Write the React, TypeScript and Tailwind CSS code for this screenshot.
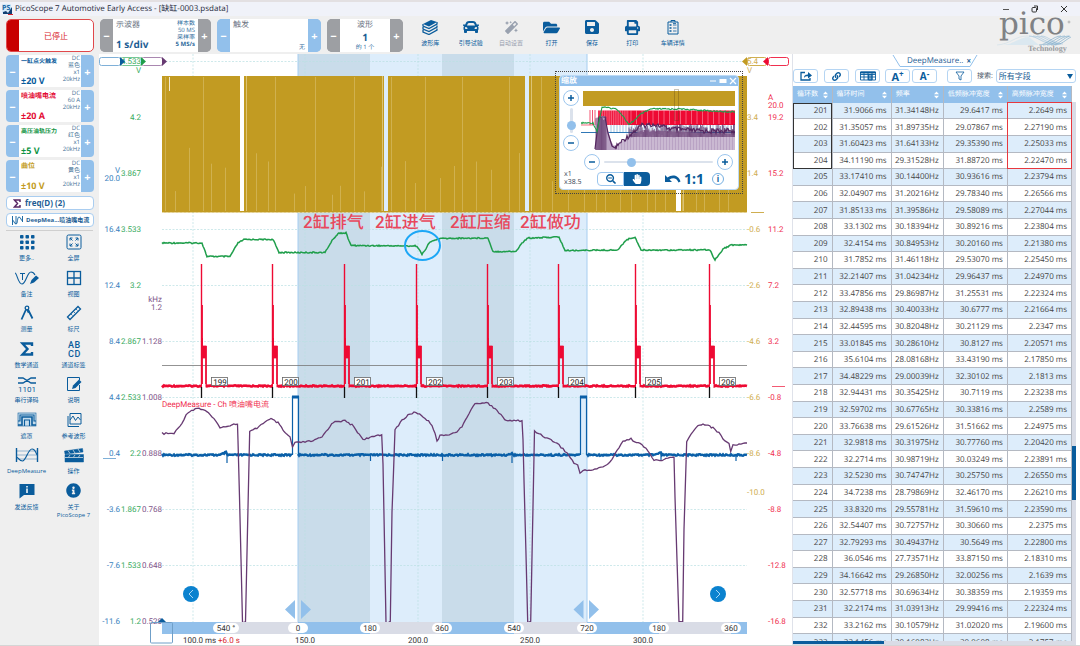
import React from "react";
import { FaCar, FaMagic, FaFolderOpen, FaSave, FaPrint, FaInfoCircle, FaSearchMinus, FaHandPaper, FaLink } from "react-icons/fa";

const CJK = "font-['Noto_Sans','Noto_Sans_CJK_SC',sans-serif]";

/* ---------- waveform data ---------- */

type Pt = [number, number];

const noise = (i: number) => {
  const v = Math.sin(i * 12.9898) * 43758.5453;
  return v - Math.floor(v) - 0.5;
};

function trace(points: Pt[], amp: number, step = 2): string {
  const out: string[] = [];
  let n = 0;
  for (let i = 0; i < points.length - 1; i++) {
    const [x0, y0] = points[i];
    const [x1, y1] = points[i + 1];
    const count = Math.max(1, Math.round(Math.abs(x1 - x0) / step));
    for (let k = 0; k < count; k++) {
      const t = k / count;
      out.push(`${(x0 + (x1 - x0) * t).toFixed(1)},${(y0 + (y1 - y0) * t + noise(n++) * amp).toFixed(1)}`);
    }
  }
  const last = points[points.length - 1];
  out.push(`${last[0]},${last[1]}`);
  return out.join(" ");
}

const GREEN: Pt[] = [
  [162, 243], [202, 243], [207, 256.5], [230, 256.5], [238, 243], [244, 239.5], [273, 239.5], [279, 252.5], [325, 252.5],
  [333, 239], [339, 233], [346, 233], [351, 245.5], [417, 246], [422, 254.5], [430, 242], [440, 238.5], [488, 238],
  [493, 251.5], [516, 251.5], [522, 243], [528, 238], [559, 237], [565, 250.5], [618, 250], [626, 240], [635, 237],
  [641, 250], [710, 250], [715, 260], [723, 249], [731, 245], [747, 245],
];

const PURPLE: Pt[] = [
  [162, 433.5], [174, 433.5], [180, 426], [188, 412], [197, 408], [205, 410], [212, 417], [220, 427], [227, 427], [232, 424],
  [237.5, 424], [238, 440], [239.5, 497], [242.5, 622], [245.5, 622], [247.5, 530], [249.7, 432], [257, 428], [263, 423],
  [271, 419], [278, 423], [285, 433], [290, 437], [292.5, 447], [295, 443], [313, 441], [322, 437], [330, 426], [335, 421],
  [345, 421], [352, 425], [363, 439], [370, 438], [378, 435], [381.7, 435], [383, 463], [386, 622], [390.3, 622], [392, 513],
  [395, 430], [402, 420], [410, 414], [416, 412], [425, 418], [432, 425], [435, 433], [437, 441], [440, 436], [455, 433],
  [462, 427], [467, 417], [473, 406], [477, 403], [488, 403], [497, 410], [503, 418], [508, 421], [522, 420.5], [523, 440],
  [524, 480], [527.7, 622], [530.7, 622], [534.5, 431], [545, 437], [557, 443], [567, 453], [574, 463], [577.7, 465],
  [580, 474], [583, 470], [593, 470], [605, 466], [612, 460], [617, 450], [623, 441], [631, 439], [642, 445], [650, 453],
  [654, 460.5], [662, 460.5], [668, 458], [674, 457], [675, 497], [679, 622], [682.7, 622], [684, 530], [686.7, 442],
  [693, 431], [698, 426], [703, 424], [708, 425], [713, 428], [719, 433], [725, 441], [729, 443], [730.7, 452], [733, 445],
  [747, 443],
];

const BLUE_DIPS: Pt[] = [[227, 463], [370.5, 461], [442.5, 461], [512, 463], [661, 461], [736, 461]];
const SPIKES = [201, 272, 344, 416, 487, 558, 635, 709];
const BANDS: [number, number, string][] = [
  [298, 72, "#c9dcea"], [370, 72, "#ddedfb"], [442, 72, "#c9dcea"], [514, 73, "#ddedfb"],
];
const STRIP: [number, number, string][] = [
  [162, 63, "#92c0eb"], [225, 73, "#d9dce6"], [298, 72, "#92c0eb"], [370, 72, "#d9dce6"], [442, 72, "#92c0eb"],
  [514, 73, "#d9dce6"], [587, 72, "#92c0eb"], [659, 72, "#d9dce6"], [731, 16, "#92c0eb"],
];
const ANGLES: [number, string][] = [
  [226, "540 °"], [298, "0"], [370, "180"], [442, "360"], [514, "540"], [587, "720"], [659, "180"], [731, "360"],
];
const YS = [61, 117, 173, 229, 285, 341, 397, 453, 509, 565, 621];
const GREEN_Y = ["4.533", "4.2", "3.867", "3.533", "3.2", "2.867", "2.533", "2.2", "1.867", "1.533", "1.2"];
const BLUE_Y = ["16.4", "12.4", "8.4", "4.4", "0.4", "-3.6", "-7.6", "-11.6"];
const PURPLE_Y = ["1.128", "1.008", "0.888", "0.768", "0.648", "0.528"];
const GOLD_Y = ["5.4", "3.4", "1.4", "-0.6", "-2.6", "-4.6", "-6.6", "-8.6"];
const RED_Y = ["19.2", "15.2", "11.2", "7.2", "3.2", "-0.8", "-4.8", "-8.8", "-12.8", "-16.8"];

const greenPath = trace(GREEN, 1.2, 1);
const purplePath = trace(PURPLE, 1.8, 2);
const redBase = trace([[162, 386], [747, 386]], 1.2, 1);
const blueA = trace([[162, 455], [220, 455], [226, 452.5], [227, 455], [292, 455]], 1.6, 1);
const blueB = trace([[298, 455], [508, 455], [512, 453], [513, 455], [580, 455]], 1.6, 1);
const blueC = trace([[587, 455], [654, 455], [661, 453], [662, 455], [747, 455]], 1.6, 1);

function ScopeChart() {
  return (
    <svg viewBox="99 54 693 591" className="block h-full w-full font-['Roboto','Noto_Sans_CJK_SC',sans-serif] text-[8px]" role="img" aria-label="Waveforms">
      {BANDS.map(([x, w, c]) => <rect key={x} x={x} y="54" width={w} height="568" fill={c} />)}
      <path d="M298 54V622M587 54V622" stroke="#a6cdf0" />
      <g stroke="#b9dfe2" strokeWidth="0.7" strokeDasharray="2 1.5">
        {YS.slice(0, 10).map((y) => <line key={y} x1="162" x2="747" y1={y + 0.5} y2={y + 0.5} />)}
        {[193, 305, 418, 530, 643].map((x) => <line key={x} x1={x} x2={x} y1="54" y2="622" />)}
      </g>

      <rect x="162" y="76" width="585" height="136.500" fill="#c29b22" />
      {Array.from({ length: 46 }, (_, i) => {
        const x = Math.round(164 + i * 12.6 + noise(i + 3) * 9);
        const full = i % 3 === 0;
        return <line key={i} x1={x + 0.5} x2={x + 0.5} y1={full ? 77 : 170 + noise(i) * 50} y2="211" stroke="#efdfae" strokeWidth="0.6" opacity="0.55" />;
      })}
      <path d="M169.500 77V91" stroke="#f4ead0" />
      <path d="M162 212.500H747" stroke="#ecdca8" strokeDasharray="2 2" strokeWidth="0.7" />
      <rect x="240" y="76" width="4" height="135" fill="#fff" />
      <rect x="384" y="76" width="4" height="135" fill="#ddedfb" />
      <rect x="525" y="76" width="4" height="135" fill="#ddedfb" />
      <rect x="676" y="76" width="5" height="135" fill="#fff" />
      <path d="M246.500 76V211M382.500 76V211M531.500 76V211M683.500 76V211" stroke="#efdfae" strokeWidth="0.6" />

      <polyline points={greenPath} fill="none" stroke="#1f9e4b" strokeWidth="1.5" />
      <path d="M162 365.500H747" stroke="#777" strokeWidth="0.8" />
      <polyline points={redBase} fill="none" stroke="#ee0a33" strokeWidth="2.6" />
      {SPIKES.map((x, i) => (
        <g key={x}>
          <path d={`M${x + 0.5} 386V264`} stroke="#ee0a33" strokeWidth="1.4" />
          <path d={`M${x + 1} 305V386`} stroke="#ee0a33" strokeWidth="1.8" />
          <path d={`M${x + 1} 346H${x + 5.500}V386H${x + 4.500}V358H${x + 1.500}Z`} fill="#ee0a33" stroke="#ee0a33" strokeWidth="0.8" />
          <path d={`M${x + 1.500} 358V338`} stroke="#ee0a33" />
          <rect x={x + 1} y="384" width="3.500" height="4" fill={x < 298 || x > 587 ? "#fff" : i % 2 === 0 ? "#cddfec" : "#ddedfb"} />
          <path d={`M${x + 0.5} 387V398`} stroke="#111" strokeWidth="1.3" />
          <rect x={x + 10.500} y="377.500" width="16" height="8" fill="#fff" stroke="#666" strokeWidth="0.8" />
          <text x={x + 19} y="384.500" textAnchor="middle" fill="#222">{199 + i}</text>
        </g>
      ))}

      <g fill="none" stroke="#0a5fa8">
        <g strokeWidth="2.400">
          <polyline points={blueA} />
          <polyline points={blueB} />
          <polyline points={blueC} />
          <path d="M292 397H299M580 397H587" strokeWidth="3" />
        </g>
        <path d="M292.500 455V396M298.500 396V455M580.500 455V396M586.500 396V455" strokeWidth="1.200" />
        {BLUE_DIPS.map(([x, y]) => <path key={x} d={`M${x} 454V${y}`} strokeWidth="1.200" />)}
      </g>
      <polyline points={purplePath} fill="none" stroke="#673a72" strokeWidth="1.300" />
      <text x="162" y="407" fill="#f0304f">DeepMeasure - Ch 喷油嘴电流</text>

      <g fill="#e8485c" className="text-[17px] font-medium">
        <text x="303" y="228">2缸排气</text>
        <text x="375" y="228">2缸进气</text>
        <text x="450" y="228">2缸压缩</text>
        <text x="520" y="228">2缸做功</text>
      </g>
      <ellipse cx="422.500" cy="245.500" rx="17.500" ry="14.500" fill="none" stroke="#1da7f6" strokeWidth="2" />

      {/* axis captions */}
      <g textAnchor="end">
        <g fill="#3a82be">
          <text x="120" y="173">V</text>
          <text x="120" y="181">20.0</text>
          {BLUE_Y.map((t, i) => <text key={t} x="120" y={YS[i + 3] + 3}>{t}</text>)}
        </g>
        <g fill="#38ab60">
          {GREEN_Y.map((t, i) => <text key={t} x="141" y={YS[i] + 3}>{t}</text>)}
          <text x="141" y="73">V</text>
        </g>
        <g fill="#805589">
          <text x="162" y="302">kHz</text>
          <text x="162" y="310">1.2</text>
          {PURPLE_Y.map((t, i) => <text key={t} x="162" y={YS[i + 5] + 3}>{t}</text>)}
        </g>
      </g>
      <g fill="#cfae50">
        {GOLD_Y.map((t, i) => <text key={t} x="747" y={YS[i] + 3}>{t}</text>)}
        <text x="747" y="73">V</text>
        <text x="747" y="495">-10.0</text>
      </g>
      <g fill="#f0304f">
        <text x="768" y="100">A</text>
        <text x="768" y="108">20.0</text>
        {RED_Y.map((t, i) => <text key={t} x="768" y={YS[i + 1] + 3}>{t}</text>)}
      </g>
      <path d="M103 458.500H116" stroke="#7fb0d8" />
      <path d="M751 212.500H764" stroke="#cfae50" />
      <path d="M772 386.500H785" stroke="#f0304f" strokeWidth="0.8" />

      {/* channel ruler handles */}
      <g fill="none">
        <rect x="99.500" y="57.500" width="21" height="8" rx="2" stroke="#7fb0d8" />
        <rect x="120.500" y="57.500" width="21" height="8" rx="2" stroke="#77c795" />
        <rect x="141.500" y="57.500" width="21" height="8" rx="2" stroke="#a987b0" />
        <rect x="747.500" y="57.500" width="19" height="8" rx="2" stroke="#cfae50" />
        <rect x="768.500" y="57.500" width="20" height="8" rx="2" stroke="#f0304f" />
      </g>
      <path d="M120 57L125 61.500L120 66Z" fill="#0a5c9c" />
      <path d="M141 57L146 61.500L141 66Z" fill="#1f9e4b" />
      <path d="M162 57L167 61.500L162 66Z" fill="#673a72" />
      <path d="M747 57L742 61.500L747 66Z" fill="#c29b22" />
      <path d="M768 57L763 61.500L768 66Z" fill="#ee0a33" />

      {/* time and phase axis */}
      {STRIP.map(([x, w, c]) => <rect key={x} x={x} y="622" width={w} height="12" fill={c} />)}
      {ANGLES.map(([x, t]) => {
        const w = t.length > 3 ? 26 : 20;
        return (
          <g key={x}>
            <rect x={x - w / 2} y="623" width={w} height="10" rx="5" fill="#fff" />
            <text x={x} y="631" textAnchor="middle" fill="#333">{t}</text>
          </g>
        );
      })}
      <rect x="150.500" y="622.500" width="22" height="20.500" rx="1" fill="none" stroke="#6f9fc8" />
      <path d="M158 622L162 618L166 622Z" fill="#0a5c9c" />
      <g fill="#333">
        <text x="183" y="643">100.0 ms</text>
        <text x="218" y="643" fill="#d8262c">+6.0 s</text>
        <g textAnchor="middle">
          <text x="305" y="643">150.0</text>
          <text x="418" y="643">200.0</text>
          <text x="530" y="643">250.0</text>
          <text x="643" y="643">300.0</text>
        </g>
      </g>
      <path d="M295 600V619L285 609.500ZM301 600V619L311 609.500ZM583.500 600V619L573.500 609.500ZM589 600V619L599 609.500Z" fill="#92c0eb" />
    </svg>
  );
}

/* ---------- zoom overview ---------- */

const bars = (x0: number, x1: number, y0: number, y1: number, step: number, seed: number, vary: number) => {
  let d = "";
  for (let x = x0, i = 0; x < x1; x += step, i++) d += `M${x.toFixed(1)} ${(y0 + noise(i + seed) * vary).toFixed(1)}V${y1}`;
  return d;
};

const overviewPurple = trace([[34, 59], [40, 53], [50, 45], [60, 37], [72, 35], [90, 40], [120, 42], [154, 42]], 5, 1);
const overviewGreen = trace([[0, 34], [12, 34], [16, 42], [21, 18], [36, 20], [42, 27], [48, 36], [60, 25], [70, 20], [100, 20], [130, 22], [154, 23]], 1.5, 1);

function Overview() {
  return (
    <svg viewBox="0 0 154 61" className="h-[61px] w-full" role="img" aria-label="Overview">
      <rect x="2" y="2" width="152" height="15" fill="#c29b22" />
      <path d={bars(9, 16, 21, 36, 2.5, 2, 0)} stroke="#ee0a33" strokeWidth="0.7" />
      <rect x="17" y="21.500" width="137" height="14.500" fill="#ee0a33" />
      <path d={bars(18, 48, 21, 36, 1.8, 9, 0)} stroke="#ffb3c0" strokeWidth="0.5" />
      <path d={bars(50, 154, 21, 35, 5.500, 5, 0)} stroke="#ffb3c0" strokeWidth="0.5" />
      <path d="M0 43.500H154" stroke="#2f77b6" strokeWidth="1.200" />
      <path d={bars(30, 154, 36, 43, 3, 5, 0)} stroke="#6aa2d2" strokeWidth="0.6" />
      <path d="M0 36H12" stroke="#ee0a33" strokeWidth="0.6" />
      <path d="M14 61L17 34L19 27H24L26 38L30 52L34 59L40 53L50 46L62 41L80 42L154 45V61Z" fill="#b9a3c4" />
      <path d={bars(15, 26, 29, 61, 1.100, 3, 4)} stroke="#54265f" strokeWidth="0.7" />
      <path d={bars(36, 154, 46, 61, 3, 11, 6)} stroke="#fff" strokeWidth="0.5" />
      <path d={bars(48, 154, 39, 48, 1.100, 17, 8)} stroke="#54265f" strokeWidth="0.7" />
      <path d="M14 60L18 28H24L27 44L31 57L34 59" fill="none" stroke="#54265f" strokeWidth="1.200" />
      <polyline points={overviewPurple} fill="none" stroke="#54265f" strokeWidth="1.200" />
      <polyline points={overviewGreen} fill="none" stroke="#1f9e4b" strokeWidth="1.100" />
      <rect x="93.500" y="0.500" width="4" height="31" fill="none" stroke="#55421a" strokeWidth="0.6" strokeDasharray="1 1" />
    </svg>
  );
}

function RoundButton({ sign, label }: { sign: "+" | "-"; label: string }) {
  return (
    <button aria-label={label} className="flex size-4 shrink-0 items-center justify-center rounded-full border border-[#9cc6ee] bg-white">
      <svg viewBox="0 0 8 8" className="size-2" stroke="#0a5c9c" strokeWidth="1.500">
        <path d={sign === "+" ? "M1 4H7M4 1V7" : "M1 4H7"} />
      </svg>
    </button>
  );
}

const THUMB = "[&::-webkit-slider-thumb]:appearance-none [&::-webkit-slider-thumb]:size-[9px] [&::-webkit-slider-thumb]:rounded-full [&::-webkit-slider-thumb]:bg-[#92c0eb]";

function ZoomWindow() {
  return (
    <section className="absolute top-[17px] right-[49px] w-[188px] border border-dotted border-[#444] p-[3px]">
      <div className={`overflow-hidden rounded-sm border border-[#bcd9f4] bg-white pb-[2px] ${CJK}`}>
        <header className="flex h-[10px] items-center bg-[#92c0eb] px-px text-[8px] leading-[10px] font-bold text-white">
          <h2 className="grow">缩放</h2>
          <svg viewBox="0 0 28 8" className="h-2 w-7" stroke="#fff" fill="none">
            <path d="M1 4H7M21 1L27 7M27 1L21 7" strokeWidth="1.200" />
            <rect x="11" y="2.500" width="6" height="3" fill="#fff" />
          </svg>
        </header>
        <div className="flex gap-[2px] px-[3px] pt-[3px]">
          <div className="flex w-4 flex-col items-center gap-[2px] pt-px">
            <RoundButton sign="+" label="垂直放大" />
            <input type="range" aria-label="垂直缩放" defaultValue={18} className={`h-[25px] w-[3px] appearance-none rounded bg-[#dbe2ec] [direction:rtl] [writing-mode:vertical-lr] ${THUMB}`} />
            <RoundButton sign="-" label="垂直缩小" />
          </div>
          <div className="min-w-0 grow"><Overview /></div>
        </div>
        <div className="mt-[3px] flex items-center gap-1 pr-[5px] pl-6">
          <RoundButton sign="-" label="水平缩小" />
          <input type="range" aria-label="水平缩放" defaultValue={23} className={`h-[2px] min-w-0 grow appearance-none rounded bg-[#dbe2ec] ${THUMB}`} />
          <RoundButton sign="+" label="水平放大" />
        </div>
        <div className="flex h-[17px] items-center pl-1">
          <p className="w-[33px] text-[7px] leading-[8px] text-gray-600">x1<br />x38.5</p>
          <button aria-label="缩放工具" className="flex h-[14px] w-[27px] items-center justify-center rounded-l-sm border border-[#9cc6ee] text-[#0a5c9c]"><FaSearchMinus size={10} /></button>
          <button aria-label="平移工具" className="flex h-[14px] w-[26px] items-center justify-center rounded-r-sm bg-[#0a5c9c] text-white"><FaHandPaper size={10} /></button>
          <button aria-label="撤消" className="ml-[14px]">
            <svg viewBox="0 0 17 12" className="h-3 w-[17px]"><path d="M1 2V9H8L5.500 6.500C9 4 13 5 14.500 9.500L16.500 8.500C14.500 2 8 1 3.500 4.500Z" fill="#0a5c9c" /></svg>
          </button>
          <button className="ml-[3px] text-[14px] leading-none font-bold text-[#0a5c9c]">1:1</button>
          <button aria-label="信息" className="ml-2 flex size-3 items-center justify-center rounded-full border border-[#74aee0] text-[8px] leading-none font-bold text-[#0a5c9c]">i</button>
        </div>
      </div>
    </section>
  );
}

function NavButton({ side }: { side: "left" | "right" }) {
  return (
    <button
      aria-label={side === "left" ? "上一个" : "下一个"}
      className={`absolute bottom-[43px] flex size-4 items-center justify-center rounded-full bg-[#0b82cf] ${side === "left" ? "left-[84px]" : "right-[66px]"}`}
    >
      <svg viewBox="0 0 8 10" className="h-[10px] w-2" fill="none" stroke="#b8e0fa" strokeWidth="0.9">
        <path d={side === "left" ? "M6 1L2 5L6 9" : "M2 1L6 5L2 9"} />
      </svg>
    </button>
  );
}

/* ---------- top bar ---------- */

function Stepper({ tone, width, children, label }: { tone: "gray" | "blue"; width: string; children: React.ReactNode; label: string }) {
  const side = tone === "gray" ? "bg-[#9d9fa3]" : "bg-[#92c0eb]";
  return (
    <div className={`flex h-[33px] overflow-hidden rounded-[5px] ${width} ${side}`}>
      <button aria-label={`${label} -`} className={`w-[13px] shrink-0 text-[11px] leading-none font-bold text-white ${side}`}>−</button>
      <div className="relative min-w-0 grow bg-white">{children}</div>
      <button aria-label={`${label} +`} className={`w-[13px] shrink-0 text-[11px] leading-none font-bold text-white ${side}`}>+</button>
    </div>
  );
}

const Books = () => (
  <svg viewBox="0 0 16 16" className="size-4">
    <path d="M1 5L9 1L15 3L7 7.500Z" fill="#0a5c9c" />
    <path d="M1 5V7L7 9.500L15 5V3M1 8V10L7 12.500L15 8V6.500M1 11V13L7 15.500L15 11V9.500" fill="none" stroke="#0a5c9c" strokeWidth="1.300" />
  </svg>
);
const Checklist = () => (
  <svg viewBox="0 0 12 16" className="h-4 w-3" fill="none" stroke="#0a5c9c">
    <path d="M1 3H11V15H1ZM4 3V1.500H8V3" />
    <path d="M2.500 6H4.500M2.500 9H4.500M2.500 12H4.500" strokeWidth="1.500" />
    <path d="M6 6H9.500M6 9H9.500M6 12H9.500M6 4.500H9" strokeWidth="0.8" />
  </svg>
);

const TOOLS: { label: string; icon: React.ReactNode; off?: boolean }[] = [
  { label: "波形库", icon: <Books /> },
  { label: "引导试验", icon: <FaCar size={16} /> },
  { label: "自动设置", icon: <FaMagic size={13} />, off: true },
  { label: "打开", icon: <FaFolderOpen size={17} /> },
  { label: "保存", icon: <FaSave size={16} /> },
  { label: "打印", icon: <FaPrint size={15} /> },
  { label: "车辆详情", icon: <Checklist /> },
];

function Logo() {
  return (
    <svg viewBox="0 0 84 38" className="h-[38px] w-[84px] overflow-visible" role="img" aria-label="pico Technology">
      <g fill="none" strokeWidth="0.6">
        <path d="M4 29C18 28 22 20 34 20S52 28 62 28" stroke="#cddfea" />
        <path d="M8 29C20 29 26 21 36 21L46 29Z" fill="#dbe8f0" stroke="none" />
        <g stroke="#9cc0d8">
          <path d="M36 20C44 20 50 28 60 28M40 20C48 20 54 28 64 28M44 20C52 20 58 28 68 28M48 20C56 20 60 28 70 28" />
          <path d="M46 29C54 29 60 20 68 20M50 29C58 29 64 20 72 20M54 29C62 29 68 20 76 20M58 29C66 29 70 22 77 20M62 29C70 28 72 24 78 21" stroke="#6ea3c6" />
        </g>
      </g>
      <text x="6" y="18" fontSize="31" fill="#808285" fontFamily="DejaVu Serif, serif">pico</text>
      <circle cx="76" cy="6" r="1" fill="none" stroke="#808285" strokeWidth="0.5" />
      <text x="35" y="35" fontSize="8" fontWeight="bold" fill="#9a9c9f" fontFamily="Liberation Serif, serif">Technology</text>
    </svg>
  );
}

function TopBar() {
  return (
    <div className="flex h-[38px] shrink-0 items-start bg-[#efefef] pt-[3px] pl-[6px]">
      <button className="flex h-[33px] w-[88px] items-center overflow-hidden rounded-[5px] border border-[#e0484b] bg-white text-[8px] text-[#d8262c]">
        <span className="h-full w-3 bg-[#c80000]" />
        <span className="grow">已停止</span>
      </button>
      <div className="ml-[6px] flex gap-[6px]">
        <Stepper tone="gray" width="w-[111px]" label="时基">
          <div className="flex h-full justify-between px-[3px] leading-none">
            <div className="flex flex-col justify-between py-[2px]">
              <span className="text-[8px] text-gray-500">示波器</span>
              <span className="text-[10px] leading-[12px] font-bold text-[#1d5d94]">1 s/div</span>
            </div>
            <div className="pt-px text-right text-[6px] leading-[7px] text-[#2f6c9d]">
              样本数<br />50 MS<br />采样率<br /><b>5 MS/s</b>
            </div>
          </div>
        </Stepper>
        <Stepper tone="blue" width="w-[104px]" label="触发">
          <div className="flex h-full justify-between px-[3px] py-[2px] leading-none">
            <span className="text-[8px] text-gray-500">触发</span>
            <span className="self-end text-[6px] text-[#2f6c9d]">无</span>
          </div>
        </Stepper>
        <Stepper tone="gray" width="w-[76px]" label="波形">
          <div className="flex h-full flex-col items-center justify-between py-[2px] leading-none">
            <span className="text-[8px] text-gray-500">波形</span>
            <b className="text-[10px] text-[#1d5d94]">1</b>
            <span className="text-[6px] text-[#2f6c9d]">的 1 个</span>
          </div>
        </Stepper>
      </div>
      <nav className="ml-[7px] grid w-[283px] grid-cols-7">
        {TOOLS.map((t) => (
          <button key={t.label} disabled={t.off} className={`flex flex-col items-center ${t.off ? "text-gray-400" : "text-[#0a5c9c]"}`}>
            <span className="flex h-4 items-center">{t.icon}</span>
            <span className="mt-1 text-[6px] leading-[8px] whitespace-nowrap">{t.label}</span>
          </button>
        ))}
      </nav>
      <div className="-mt-[3px] mr-[3px] ml-auto"><Logo /></div>
    </div>
  );
}

function TitleBar() {
  return (
    <header className="flex h-4 shrink-0 items-center border-t-2 border-[#e3e0e2] bg-[#f0f2f9] pr-[3px] pl-[2px] text-[8px] leading-none text-gray-800">
      <svg viewBox="0 0 11 11" className="size-[11px] overflow-visible">
        <rect width="9" height="9" fill="#d5e8f7" />
        <text x="0" y="6" fontSize="7" fontWeight="bold" fill="#1a66a5">PS</text>
        <path d="M1 8L4 7L6 9L10 3V10H1Z" fill="#123f73" />
        <path d="M6 10H11V11H6Z" fill="#d8262c" />
      </svg>
      <h1 className="ml-[2px]">PicoScope 7 Automotive Early Access - [缺缸-0003.psdata]</h1>
      <div className="ml-auto flex items-center gap-[21px] pr-[9px]">
        <button aria-label="最小化"><svg viewBox="0 0 8 8" className="size-2" stroke="#555"><path d="M1 4.500H7" /></svg></button>
        <button aria-label="还原"><svg viewBox="0 0 8 8" className="size-2" fill="none" stroke="#333"><rect x="1" y="2.500" width="4.500" height="4.500" rx="1" /><path d="M3 1H6.500V5" /></svg></button>
        <button aria-label="关闭"><svg viewBox="0 0 8 8" className="size-2" stroke="#333"><path d="M1 1L7 7M7 1L1 7" /></svg></button>
      </div>
    </header>
  );
}

/* ---------- side bar ---------- */

const CHANNELS = [
  { name: "一缸点火触发", range: "±20 V", info: ["DC", "蓝色", "x1", "20kHz"], color: "text-[#0a5c9c]" },
  { name: "喷油嘴电流", range: "±20 A", info: ["DC", "60 A", "20kHz"], color: "text-[#e30b34]" },
  { name: "高压油轨压力", range: "±5 V", info: ["DC", "红色", "x1", "20kHz"], color: "text-[#0f9444]" },
  { name: "曲位", range: "±10 V", info: ["DC", "黄色", "x1", "20kHz"], color: "text-[#c29b22]" },
];

function ChannelCard({ c }: { c: (typeof CHANNELS)[number] }) {
  return (
    <div className="flex h-8 overflow-hidden rounded-[4px] bg-[#92c0eb]">
      <button aria-label={`${c.name} -`} className="w-[13px] shrink-0 text-[11px] leading-none font-bold text-white">−</button>
      <div className="flex min-w-0 grow justify-between bg-white pr-px pl-[2px]">
        <div className={`flex flex-col justify-between pt-[2px] pb-px font-bold whitespace-nowrap ${c.color}`}>
          <span className={`leading-[9px] ${c.name.length > 5 ? "text-[6px]" : "text-[7px]"}`}>{c.name}</span>
          <span className="text-[9px] leading-[10px]">{c.range}</span>
        </div>
        <div className="text-right text-[6px] leading-[7px] whitespace-nowrap text-[#3f6f96]">
          {c.info.map((t) => <div key={t}>{t}</div>)}
        </div>
      </div>
      <button aria-label={`${c.name} +`} className="w-[13px] shrink-0 text-[11px] leading-none font-bold text-white">+</button>
    </div>
  );
}

const B = "#0a5c9c";
const Ico = ({ w = 16, children }: { w?: 16 | 24; children: React.ReactNode }) => (
  <svg viewBox={`0 0 ${w} 16`} className={`overflow-visible ${w === 24 ? "h-4 w-6" : "size-4"}`} fill="none" stroke={B} strokeWidth="1.300">{children}</svg>
);

const SIDE: { label: string; icon: React.ReactNode }[] = [
  { label: "更多..", icon: <Ico><g fill={B} stroke="none">{[1, 6.500, 12].map((y) => [1, 6.500, 12].map((x) => <rect key={`${x}-${y}`} x={x} y={y} width="3.500" height="3.500" rx="0.8" />))}</g></Ico> },
  { label: "全屏", icon: <Ico><rect x="1" y="1" width="14" height="14" rx="1.500" strokeWidth="1" /><path d="M4 6.500V4H6.500M9.500 4H12V6.500M12 9.500V12H9.500M6.500 12H4V9.500M4 4L6.500 6.500M12 4L9.500 6.500M4 12L6.500 9.500M12 12L9.500 9.500" strokeWidth="1" /></Ico> },
  { label: "备注", icon: <Ico w={24}><path d="M0 3C2 3 3 14 7 14S12 2 16 2C18 2 19 3 20 5" strokeWidth="1.100" /><path d="M5 3.500H10M7.500 3.500V10" strokeWidth="1" /><path d="M15 14L16.500 10L21 5.500L24 8L19 12.500Z" fill={B} stroke="none" /></Ico> },
  { label: "视图", icon: <Ico><rect x="1.500" y="1.500" width="13" height="13" /><path d="M8 1.500V14.500M1.500 8H14.500" /></Ico> },
  { label: "测量", icon: <Ico><circle cx="8" cy="3" r="1.800" /><path d="M7 4.500L2.500 14.500M9 4.500L13.500 13.500" strokeWidth="1.800" /><path d="M8 5L9.500 8" /></Ico> },
  { label: "标尺", icon: <Ico><path d="M1.500 12L12 1.500L14.500 4L4 14.500Z" /><path d="M5 9L6.500 10.500M7.500 6.500L9 8M10 4L11.500 5.500" strokeWidth="0.8" /></Ico> },
  { label: "数学通道", icon: <Ico><path d="M13 5V2.500H3.500L8.500 8L3.500 13.500H13V11" strokeWidth="2.400" /></Ico> },
  { label: "通道标签", icon: <Ico><g fill={B} stroke="none" fontSize="9" fontWeight="500" className="font-['Roboto']"><text x="2" y="7">A</text><text x="8.500" y="7">B</text><text x="2" y="15.500">C</text><text x="8.500" y="15.500">D</text></g></Ico> },
  { label: "串行译码", icon: <Ico w={24}><path d="M3 2H8L16 7H21M3 7H8L16 2H21" strokeWidth="1.400" /><text x="12" y="15.500" textAnchor="middle" fontSize="8" fill={B} stroke="none" className="font-['Roboto']">1101</text></Ico> },
  { label: "说明", icon: <Ico><path d="M13.500 9V14.500H1.500V1.500H13.500V4" strokeWidth="1" /><path d="M3 2V1M5 2V1M7 2V1M9 2V1M11 2V1" strokeWidth="0.8" /><path d="M6 13L7 9.500L13 3.500L15.500 6L9.500 12Z" fill={B} stroke="none" /></Ico> },
  { label: "遮罩", icon: <Ico w={24}><rect x="3" y="1" width="18" height="13" fill="#c5dcec" strokeWidth="0.6" /><path d="M3 13H7V5H17V13H21" strokeWidth="1.600" /><path d="M9.500 14V8H14.500V14M3 9H5V3H19V9H21" strokeWidth="1.100" /></Ico> },
  { label: "参考波形", icon: <Ico><path d="M4 1.500H15V12H4Z" strokeWidth="1" /><path d="M2 4V14.500H13" strokeWidth="1" /><path d="M4 8L7 4L9.500 8.500L12 5L14.500 8" strokeWidth="1" /></Ico> },
  { label: "DeepMeasure", icon: <Ico w={24}><path d="M1.500 1V15M22.500 1V15" strokeWidth="1.400" /><path d="M2 8H22M2 4H22M2 12H22" strokeWidth="0.4" /><path d="M1.500 10C3 10 4 14 7.500 14S13 2 17 2S21 8 22.500 8" strokeWidth="1.200" /></Ico> },
  { label: "操作", icon: <Ico w={24}><path d="M3 7.500H21.500V15H3Z" fill={B} strokeWidth="0.5" /><path d="M2.500 4L20.500 1.500L21 5L3 7Z" fill={B} strokeWidth="0.5" /><path d="M6 3.500L8 6.500M11 3L13 6M16 2L18 5M8 8L6.500 10M13 8L11.500 10M18 8L16.500 10M3 10.500H21" stroke="#efefef" strokeWidth="0.7" /></Ico> },
  { label: "发送反馈", icon: <Ico><path d="M0.500 1H15.500V12H5L0.500 15.500Z" fill={B} stroke="none" /><path d="M8 5.500V10M8 3V4.500" stroke="#fff" strokeWidth="1.500" /></Ico> },
  { label: "关于 PicoScope 7", icon: <FaInfoCircle size={15} /> },
];

function SideBar() {
  return (
    <aside className="w-[99px] shrink-0 bg-[#efefef] px-[6px] pt-px">
      <div className="mr-[-1px] flex flex-col gap-[3px]">
        {CHANNELS.map((c) => <ChannelCard key={c.name} c={c} />)}
        <button className="mt-px flex h-[14px] items-center gap-1 rounded-[4px] border border-[#a9cdf0] bg-white px-[6px] text-[8px] leading-none font-bold text-[#1d5d94]">
          <svg viewBox="0 0 8 9" className="h-[9px] w-2" fill="none" stroke="#5a2a66" strokeWidth="1.500"><path d="M7 3V1H1.500L4.500 4.500L1.500 8H7V6" /></svg>
          freq(D) (2)
        </button>
        <button className="flex h-[14px] items-center gap-[3px] rounded-[4px] border border-[#a9cdf0] bg-white px-[5px] text-[6px] leading-none font-bold whitespace-nowrap text-[#1d5d94]">
          <svg viewBox="0 0 11 9" className="h-[9px] w-[11px] shrink-0" fill="none" stroke={B} strokeWidth="0.9"><path d="M0.500 0V9M10.500 0V6M0.500 4C2 4 2 8 4 8S5 1 7 1S9 5 10.500 5M4 0V8" /></svg>
          DeepMea...喷油嘴电流
        </button>
      </div>
      <hr className="mt-[3px] border-[#cfcfcf]" />
      <div className="mt-[3px] grid h-[284px] grid-cols-[41px_53px] auto-rows-fr">
        {SIDE.map((s) => (
          <button key={s.label} className="flex min-h-0 flex-col items-center text-[#0a5c9c]">
            <span className="flex h-4 shrink-0 items-center">{s.icon}</span>
            <span className={`mt-1 text-[6px] leading-[8px] ${s.label.startsWith("关于") ? "w-9" : "whitespace-nowrap"}`}>{s.label}</span>
          </button>
        ))}
      </div>
    </aside>
  );
}

/* ---------- measurement table ---------- */

const ROWS: string[][] = `201 31.9066 31.34148 29.6417 2.2649
202 31.35057 31.89735 29.07867 2.27190
203 31.60423 31.64133 29.35390 2.25033
204 34.11190 29.31528 31.88720 2.22470
205 33.17410 30.14400 30.93616 2.23794
206 32.04907 31.20216 29.78340 2.26566
207 31.85133 31.39586 29.58089 2.27044
208 33.1302 30.18394 30.89216 2.23804
209 32.4154 30.84953 30.20160 2.21380
210 31.7852 31.46118 29.53070 2.25450
211 32.21407 31.04234 29.96437 2.24970
212 33.47856 29.86987 31.25531 2.22324
213 32.89438 30.40033 30.6777 2.21664
214 32.44595 30.82048 30.21129 2.2347
215 33.01845 30.28610 30.8127 2.20571
216 35.6104 28.08168 33.43190 2.17850
217 34.48229 29.00039 32.30102 2.1813
218 32.94431 30.35425 30.7119 2.23238
219 32.59702 30.67765 30.33816 2.2589
220 33.76638 29.61526 31.51662 2.24975
221 32.9818 30.31975 30.77760 2.20420
222 32.2714 30.98719 30.03249 2.23891
223 32.5230 30.74747 30.25750 2.26550
224 34.7238 28.79869 32.46170 2.26210
225 33.8320 29.55781 31.59610 2.23590
226 32.54407 30.72757 30.30660 2.2375
227 32.79293 30.49437 30.5649 2.22800
228 36.0546 27.73571 33.87150 2.18310
229 34.16642 29.26850 32.00256 2.1639
230 32.57718 30.69634 30.38359 2.19359
231 32.2174 31.03913 29.99416 2.22324
232 33.2162 30.10579 31.02020 2.19600
233 33.1456 30.16983 30.9608 2.1757`.split("\n").map((r) => r.split(" "));

const HEADERS = ["循环数", "循环时间", "频率", "低频脉冲宽度", "高频脉冲宽度"];
const UNITS = ["", " ms", "Hz", " ms", " ms"];

const TOOL_BTN = "flex h-[14px] w-[25px] items-center justify-center rounded-[3px] border border-[#b5d5f3] bg-white text-[#0a5c9c]";

function MeasurePanel() {
  return (
    <section className="flex w-[287px] shrink-0 flex-col bg-white pr-1">
      <div className="relative ml-[99px] flex h-[14px] w-[86px] shrink-0 items-center justify-center pl-2 text-[8px] leading-none text-[#1d5d94]">
        <svg viewBox="0 0 86 14" className="absolute inset-0" fill="none" stroke="#92c0eb"><path d="M1 1L8 12.500H78L85 1" /></svg>
        <span>DeepMeasure..</span>
        <button aria-label="关闭标签" className="ml-[3px] font-bold">×</button>
      </div>
      <div className="mt-px flex h-[14px] shrink-0 items-center">
        <div className="flex gap-[6px]">
          <button aria-label="导出" className={TOOL_BTN}>
            <svg viewBox="0 0 12 10" className="h-[10px] w-3" fill="none" stroke={B} strokeWidth="1.300"><path d="M5 1.500H1V9H10V7" /><path d="M4 7C4 4 6 3.500 8 3.500V1L12 4.500L8 7.500V5.300C6 5.300 5 5.500 4 7Z" fill={B} stroke="none" /></svg>
          </button>
          <button aria-label="链接" className={TOOL_BTN}><FaLink size={9} /></button>
          <button aria-label="列" className={TOOL_BTN}>
            <svg viewBox="0 0 16 10" className="h-[10px] w-4" fill="none" stroke={B} strokeWidth="0.9"><path d="M0.500 1H15.500V9H0.500ZM4 1V9M8 1V9M12 1V9M0.500 3.500H15.500M0.500 6H15.500" /><path d="M0.500 1H15.500V2H0.500Z" fill={B} /><path d="M8.500 3.500H12V9H8.500Z" fill={B} fillOpacity="0.500" /></svg>
          </button>
        </div>
        <button className={`ml-[5px] ${TOOL_BTN} text-[11px] leading-none font-bold`}>A<span className="self-start text-[8px]">+</span></button>
        <button className={`ml-[2px] ${TOOL_BTN} text-[10px] leading-none font-bold`}>A<span className="self-start text-[8px]">-</span></button>
        <button aria-label="筛选" className={`ml-[10px] ${TOOL_BTN}`}>
          <svg viewBox="0 0 10 10" className="size-[10px]" fill="none" stroke={B} strokeWidth="0.8"><path d="M1 1H9L6 5V9L4 8V5Z" /></svg>
        </button>
        <label htmlFor="field" className="ml-[5px] text-[7px] leading-none whitespace-nowrap text-gray-600">搜索:</label>
        <div className="relative ml-[3px] flex min-w-0 grow">
          <select id="field" className="block h-[14px] w-full appearance-none rounded-[3px] border border-[#b5d5f3] bg-white pl-[2px] text-[8px] leading-none text-[#1d5d94]">
            <option>所有字段</option>
          </select>
          <svg viewBox="0 0 6 5" className="pointer-events-none absolute top-[5px] right-[3px] h-[5px] w-[6px]" fill={B}><path d="M0 0H6L3 5Z" /></svg>
        </div>
      </div>
      <div className="mt-[3px] flex min-h-0 grow">
        <div className="relative min-w-0 grow overflow-hidden">
          <table className="h-[565px] w-full table-fixed border-collapse text-[8px] leading-none">
            <colgroup>
              <col className="w-[39px]" /><col className="w-[59px]" /><col className="w-[52px]" /><col className="w-[64px]" /><col className="w-[64px]" />
            </colgroup>
            <thead>
              <tr className="h-[17px] bg-[#92c0eb] text-white">
                {HEADERS.map((h) => (
                  <th key={h} scope="col" className="border-r border-[#b4b9c2] p-0 font-normal">
                    <div className="flex items-center justify-between pr-1 pl-1 text-[7px] whitespace-nowrap">
                      {h}
                      <svg viewBox="0 0 5 8" className="h-2 w-[5px] shrink-0" fill="#fff"><path d="M0 3.300L2.500 0.500L5 3.300ZM0 4.700L2.500 7.500L5 4.700Z" /></svg>
                    </div>
                  </th>
                ))}
              </tr>
            </thead>
            <tbody>
              {ROWS.map((r) => (
                <tr key={r[0]} className="border-b border-[#b4b9c2] text-[#444] odd:bg-[#ddedfb]">
                  {r.map((v, i) => (
                    <td key={i} className="border-r border-[#b4b9c2] pt-px pr-1 pb-0 pl-0 text-right whitespace-nowrap">{v}{UNITS[i]}</td>
                  ))}
                </tr>
              ))}
            </tbody>
          </table>
          <div className="pointer-events-none absolute top-[17px] left-0 h-[66px] w-[39px] border border-[#333]" />
          <div className="pointer-events-none absolute top-4 right-0 h-[67px] w-[65px] border border-[#e8383e]" />
        </div>
        <div className="mt-4 w-[5px] bg-[#d9dce6] pt-[344px]"><div className="h-[54px] w-1 bg-[#0a5c9c]" /></div>
      </div>
      <div className="h-[4px] shrink-0 bg-[#d9dce6]"><div className="h-[3px] w-[91px] bg-[#0a5c9c]" /></div>
    </section>
  );
}

export default function App() {
  return (
    <div className="flex h-screen flex-col overflow-hidden border-b border-[#d5d5d5] bg-white font-['Open_Sans','Noto_Sans_CJK_SC',sans-serif] [text-rendering:geometricPrecision]">
      <TitleBar />
      <TopBar />
      <div className="flex min-h-0 grow">
        <SideBar />
        <main className="relative min-w-0 grow">
          <ScopeChart />
          <ZoomWindow />
          <NavButton side="left" />
          <NavButton side="right" />
        </main>
        <div className="w-px shrink-0 bg-[#dfe2ea]" />
        <MeasurePanel />
      </div>
    </div>
  );
}
